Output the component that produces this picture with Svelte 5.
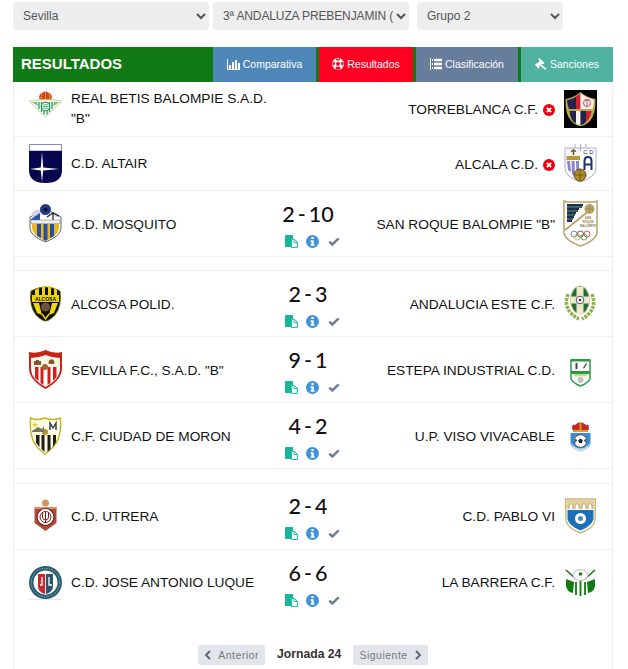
<script>
  const rows = [
    { cls: 'r1', home: 'betis', homeName: 'REAL BETIS BALOMPIE S.A.D. "B"', away: 'torre', awayName: 'TORREBLANCA C.F.', status: true },
    { cls: 'r2', home: 'altair', homeName: 'C.D. ALTAIR', away: 'alcala', awayName: 'ALCALA C.D.', status: true },
    { cls: 'played', home: 'mosquito', homeName: 'C.D. MOSQUITO', away: 'roque', awayName: 'SAN ROQUE BALOMPIE "B"', score: '2 - 10' },
    { spacer: 's1' },
    { cls: 'played', home: 'alcosa', homeName: 'ALCOSA POLID.', away: 'andalucia', awayName: 'ANDALUCIA ESTE C.F.', score: '2 - 3' },
    { cls: 'played', home: 'sevilla', homeName: 'SEVILLA F.C., S.A.D. "B"', away: 'estepa', awayName: 'ESTEPA INDUSTRIAL C.D.', score: '9 - 1' },
    { cls: 'played', home: 'moron', homeName: 'C.F. CIUDAD DE MORON', away: 'viso', awayName: 'U.P. VISO VIVACABLE', score: '4 - 2' },
    { spacer: 's2' },
    { cls: 'played up', home: 'utrera', homeName: 'C.D. UTRERA', away: 'pablo', awayName: 'C.D. PABLO VI', score: '2 - 4' },
    { cls: 'played up last', home: 'jose', homeName: 'C.D. JOSE ANTONIO LUQUE', away: 'barrera', awayName: 'LA BARRERA C.F.', score: '6 - 6' }
  ];
</script>

{#snippet crest(id)}
  <svg class="crest" viewBox="0 0 33 39" width="33" height="39" aria-hidden="true">
    {#if id === 'betis'}
      <path d="M0 11 Q8 9.500 16.500 9.500 Q25 9.500 33 11 L16.500 27Z" fill="#fbfbf2" stroke="#a5c98f" stroke-width=".8"/>
      <path d="M2.500 12 L8 12 L9 16 Z M30.500 12 L25 12 L24 16 Z" fill="#7dbb74"/>
      <path d="M9 11.500h15v7l-7.500 7.500-7.500-7.500z" fill="#fff"/>
      <path d="M10 12v7M12.500 12v10M15 12v12.500M18 12v12.500M20.500 12v10M23 12v7" stroke="#2a9a52" stroke-width="1.300"/>
      <circle cx="16.500" cy="16.500" r="4.200" fill="#fff" stroke="#158a45" stroke-width="1.100"/>
      <path d="M13.500 16.500h6M14 14.800h5M14 18.200h5" stroke="#158a45" stroke-width=".7"/>
      <path d="M10.500 9 Q9.500 4 13 3 Q16.500 0 20 3 Q23.500 4 22.500 9Z" fill="#d8342a"/>
      <path d="M10.500 9.200h12M16.500 1v8M13 3.500l-1 5M20 3.500l1 5" stroke="#d9a520" stroke-width="1.100"/>
    {:else if id === 'altair'}
      <path d="M.5.500h32V7H.5z" fill="#fff" stroke="#8a8aa6"/>
      <path d="M0 7h33v19q0 13-16.500 13T0 26z" fill="#06064f"/>
      <path d="M13 8l1.200 15.500L30 25l-15.800 1.500L13 38l-1.200-11.500L1 25l10.800-1.500z" fill="#fff"/>
    {:else if id === 'torre'}
      <rect y="0" width="33" height="38" fill="#000"/>
      <path d="M1.500 9 Q10 7.500 16.500 2 Q23 7.500 31.500 9 Q32 24 26 31 Q21 36 16.500 36 Q12 36 7 31 Q1 24 1.500 9Z" fill="#b9a94a"/>
      <path d="M3 10 Q9 9 12 6.500 V19 H5 Q3 14 3 10Z M12 21 V33 Q9 32.500 8 30 Q6 26 5.500 21Z" fill="#23234f"/>
      <path d="M12 6.500 L16.500 3.500 V19 H12Z M22 21 H27.500 Q26.500 28 22 32Z" fill="#d31f35"/>
      <path d="M16.500 3.500 Q22 7.500 30 10 Q30 15 28.500 19 H16.500Z" fill="#f2ecec"/>
      <path d="M12 21h4.500v14q-2.500 0-4.500-1.500z" fill="#f4f4f4"/>
      <path d="M16.500 21H22V32q-2.500 3-5.500 3z" fill="#23234f"/>
      <circle cx="23" cy="13" r="3.500" fill="none" stroke="#c65a68"/>
      <path d="M20.500 10h5M23 10v7" stroke="#c65a68"/>
    {:else if id === 'alcala'}
      <path d="M1 4H32V24Q32 33 16.500 38Q1 33 1 24Z" fill="#fff" stroke="#a9afc9"/>
      <path d="M16.500 0V7M11 0V4M22 0V4" stroke="#a9afc9"/>
      <path d="M3 5h13v12H3z" fill="#f4f4f4"/>
      <path d="M9.500 5v6M7 7h5" stroke="#6b5a1c" stroke-width="1.500"/>
      <path d="M2.500 12h13.500v4H2.500z" fill="#b79a36"/>
      <path d="M3 17h3l1 11-3-2zM7.500 17h3l.5 15-3-2zM12 17h3v10l-2.500 3z" fill="#8a84c9"/>
      <text class="cl" x="24.500" y="9.500">C D</text>
      <path d="M20.500 26v-9q0-4 3.500-4t3.500 4v9M20.500 20.500h7" fill="none" stroke="#1f2f6f" stroke-width="2"/>
      <circle cx="16" cy="31" r="6" fill="#b08a2c" stroke="#5f4a12"/>
      <path d="M10.500 31h11M16 25.500v11" stroke="#5f4a12" stroke-width=".7"/>
    {:else if id === 'mosquito'}
      <path d="M1 13 L16.500 5 L32 13 V24 Q32 32 16.500 38 Q1 32 1 24Z" fill="#fff" stroke="#666"/>
      <path d="M3 8l7-3 2 6-8 4zM24 7l6 4-1 3-5-3z" fill="#cfd3e8"/>
      <path d="M2 15L11 9 11 16H2z" fill="#2a52a8"/>
      <circle cx="16.500" cy="5.500" r="5.500" fill="#233a83"/>
      <circle cx="16.500" cy="5.500" r="2" fill="#0c1236"/>
      <path d="M18 13l6-4 6 3M24 9v8" stroke="#222" stroke-width="1.200" fill="none"/>
      <rect x="2" y="16" width="29" height="3.500" fill="#eee" stroke="#777" stroke-width=".5"/>
      <path d="M3 20H30V24Q30 31 16.500 37Q3 31 3 24Z" fill="#e9b820"/>
      <path d="M8 20h4v14l-4-2zM14.500 20h4v16l-2 .8-2-.8zM21 20h4v12l-4 2z" fill="#2750a2"/>
    {:else if id === 'roque'}
      <path d="M0-3 L3-2 H30 L33-3 V28 Q33 36 16.500 42 Q0 36 0 28Z" fill="#fff" stroke="#b7a36a" stroke-width="1.500"/>
      <path d="M3 0H19V2H3zM3 4H15V6H3zM3 8H12V10H3zM3 12H10V14H3zM3 16H8V18H3z" fill="#2b2760"/>
      <path d="M3 2H18V4H3zM3 6H14V8H3zM3 10H11V12H3zM3 14H9V16H3z" fill="#2f6e44"/>
      <path d="M1 26L26 6" stroke="#b7a36a" stroke-width="1.800"/>
      <circle cx="25.500" cy="5" r="5" fill="#b7a36a"/>
      <path d="M21 5h9M25.500 .5v9" stroke="#8f7f4c" stroke-width=".5"/>
      <text class="sr" x="24" y="15">SAN</text><text class="sr" x="24" y="19">ROQUE</text><text class="sr" x="24" y="23">BALOMPIE</text>
      <g fill="none" stroke-width=".8"><circle cx="10" cy="30" r="3" stroke="#3a70bd"/><circle cx="16.500" cy="30" r="3" stroke="#333"/><circle cx="23" cy="30" r="3" stroke="#d33"/><circle cx="13.500" cy="33" r="3" stroke="#d9a520"/><circle cx="20" cy="33" r="3" stroke="#3a9a52"/></g>
    {:else if id === 'alcosa'}
      <path d="M2 7 Q16.500 -1 31 7 Q33 22 26 31 Q20 37 16.500 37 Q13 37 7 31 Q0 22 2 7Z" fill="#0d0d05" stroke="#6d6310"/>
      <path d="M6 6l4-2v7H6zM13 2h3v9h-3zM19 2h3v9h-3zM25 4l3 2v5h-3z" fill="#ecd50e"/>
      <rect x="3" y="11" width="27" height="7" fill="#e8d20d"/>
      <text class="ac" x="16.500" y="16.800">ALCOSA</text>
      <path d="M4 19L10 19 13 31 8 29ZM29 19L23 19 20 31 25 29Z" fill="#ecd50e"/>
      <circle cx="16.500" cy="23" r="4.500" fill="#6d5040"/>
      <path d="M13 30l3.500 5 3.500-5" fill="none" stroke="#ecd50e" stroke-width="1.500"/>
    {:else if id === 'andalucia'}
      <g fill="none" stroke="#8fb04a" stroke-width="3.500" stroke-dasharray="3 1"><path d="M4 10 Q-2 26 15 35"/><path d="M28 10 Q34 26 18 35"/></g>
      <ellipse cx="16" cy="16" rx="9.500" ry="14" fill="#1f6e36" stroke="#d3c98f"/>
      <path d="M12.500 3h7v27h-7zM6.500 12.500h19v7h-19z" fill="#efe9cc"/>
      <circle cx="16" cy="16" r="3.800" fill="#fff" stroke="#555"/>
      <circle cx="16" cy="16" r="1.300" fill="#333"/>
    {:else if id === 'sevilla'}
      <path d="M0 2 Q8 4 16.500 0 Q25 4 33 2 V18 Q33 30 16.500 39 Q0 30 0 18Z" fill="#c8211a"/>
      <path d="M2 8 Q9 8 16.500 5 Q24 8 31 8 V17H2z" fill="#fff5e6"/>
      <path d="M2 17H31V19Q31 29 16.500 37Q2 29 2 19Z" fill="#fff"/>
      <path d="M6 17h3.500v14l-3.500-3zM11.500 17h3v18l-3-2zM18.500 17h3v16l-3 2zM24 17h3.500v10l-3.500 4z" fill="#d21f1a"/>
      <path d="M5 15v-4h2v-1h3v1h2v4zM20 14a3 3 0 1 1 5 0z" fill="#8a5526"/>
      <circle cx="16" cy="17" r="3" fill="#9c6a2e"/>
    {:else if id === 'estepa'}
      <path d="M7 10H26V28Q26 32 16.500 36Q7 32 7 28Z" fill="#fff" stroke="#2a9a45" stroke-width="1.500"/>
      <path d="M7 9h19v2.500h-19zM7 21h19v3H7z" fill="#2a9a45"/>
      <path d="M11.500 13h2v6h-2zM19 18l3-5 1 .7-3 5z" fill="#444"/>
      <circle cx="16.500" cy="30" r="3" fill="#c4c4c4"/>
      <path d="M9 24h15l-2 2.500h-11z" fill="#c8dd8a"/>
    {:else if id === 'moron'}
      <path d="M1.500 2 Q8 5 16 2 Q24 5 31.500 2 Q33 23 23 32 Q18 37 16 38 Q14 37 9 32 Q0 23 1.500 2Z" fill="#fffce0" stroke="#c5b526" stroke-width="1.400"/>
      <path d="M7 19h3.500v12L7 27zM12.500 19h3v17l-3-3zM18.500 19h3v14l-3 3zM24 19h3v7l-3 5z" fill="#1e1e1e"/>
      <circle cx="16" cy="16" r="3" fill="#b58f2c"/>
      <path d="M3 15l6-4 4 2 2-3v6H3z" fill="#767660"/>
      <path d="M19 6h11v9H19z" fill="#fff"/>
      <path d="M21 14V7l3 5 3-5v7" fill="none" stroke="#333" stroke-width="1.400"/>
      <path d="M6 6l1 2 2 .2-1.500 1.300.5 2L6 10.500 4 11.500l.5-2L3 8.200 5 8z" fill="#e6d63c"/>
    {:else if id === 'viso'}
      <path d="M8.500 14 Q7 8 11 9 Q16.500 3.500 22 9 Q26 8 24.500 14Z" fill="#c2292a"/>
      <path d="M9 15H24M16.500 6V14" stroke="#d9a520" stroke-width="1.800"/>
      <path d="M6.500 17H26.500V28Q26 32 16.500 35.500 Q7 32 6.500 28Z" fill="#3a8fd4"/>
      <path d="M6.500 27Q16.500 38 26.500 27Q26 32 16.500 36Q7 32 6.500 27Z" fill="#c9dfe8"/>
      <circle cx="16.500" cy="25" r="6.300" fill="#fff" stroke="#333" stroke-width=".7"/>
      <path d="M16.500 22.500l2.300 1.700-.9 2.700h-2.800l-.9-2.700zM11 23l2 1-1.500 3zM22 23l-2 1 1.500 3z" fill="#222"/>
    {:else if id === 'utrera'}
      <circle cx="16.500" cy="7" r="3.500" fill="#d6935f"/>
      <path d="M5.500 11H27.500V27L16.500 35 5.500 27Z" fill="#b34a33"/>
      <path d="M5.500 11H27.500V13H5.500z" fill="#d88f63"/>
      <circle cx="16.500" cy="21" r="8.500" fill="#fff" stroke="#7d1f1f" stroke-width="1.200"/>
      <circle cx="16.500" cy="21" r="5.500" fill="none" stroke="#7d1f1f"/>
      <path d="M13.500 16v5a3 3 0 0 0 6 0v-5M16.500 15v12" fill="none" stroke="#7d1f1f"/>
    {:else if id === 'pablo'}
      <path d="M1.500 3H31.500L31 24Q30 32 16.500 37Q3 32 2 24Z" fill="#fff" stroke="#c8b478" stroke-width="1.400"/>
      <path d="M2.500 4H30.500V13H2.500z" fill="#e2cf9f"/>
      <path d="M5 13V9q2-3 4 0v4M11 13V9q2-3 4 0v4M18 13V9q2-3 4 0v4M24 13V9q2-3 4 0v4" fill="#fff" stroke="#bba469"/>
      <path d="M3.500 14H29.500V23Q28 30 16.500 34.500Q5 30 3.500 23Z" fill="#1b70b7"/>
      <circle cx="16.500" cy="22.500" r="5.500" fill="#fff"/>
      <circle cx="16.500" cy="22.500" r="2.500" fill="#4a88b8"/>
    {:else if id === 'barrera'}
      <path d="M2 7L12 16M31 7L21 16" stroke="#1a6e1a" stroke-width="1.500"/>
      <ellipse cx="16.500" cy="12" rx="7.500" ry="5.500" fill="#fff" stroke="#bbb"/>
      <circle cx="16.500" cy="11" r="1.800" fill="#1a7a1a"/>
      <path d="M2 16L10 19 9 30Q3 29 2 23ZM31 16L23 19 24 30Q30 29 31 23Z" fill="#127a12"/>
      <path d="M10 19h13v12h-13z" fill="#f6f6f6"/>
      <path d="M12 19v13M16.500 18v15M21 19v13" stroke="#127a12" stroke-width="1.800"/>
    {:else if id === 'jose'}
      <circle cx="16.500" cy="19.500" r="16.500" fill="#285a6e"/>
      <circle cx="16.500" cy="19.500" r="12" fill="#fff"/>
      <circle cx="16.500" cy="19.500" r="14.200" fill="none" stroke="#8cabb8" stroke-dasharray="1.500 1"/>
      <path d="M9 11H24V23Q24 29 16.500 32Q9 29 9 23Z" fill="#e6e6e6"/>
      <path d="M9 11H16V31Q9 29 9 23Z" fill="#cc2630"/>
      <path d="M17 11H24V23Q24 29 17 31Z" fill="#2a566b"/>
      <path d="M13 14v8h-2M20 14v8h3" fill="none" stroke="#fff" stroke-width="1.300"/>
      <path d="M0 36.500H33" stroke="#e2e6e6"/>
    {/if}
  </svg>
{/snippet}

{#snippet ficons()}
  <div class="ficons">
    <svg viewBox="0 0 13 13" width="13" height="13" aria-hidden="true">
      <path d="M0 0H8V4H6V12H0Z" fill="#15b79b"/>
      <path d="M6.500 4.500H9.500L12.500 7.500V12.500H6.500Z" fill="#fff" stroke="#1cc4a6"/>
      <path d="M9 4.500V7.500H12" fill="none" stroke="#1cc4a6"/>
    </svg>
    <svg viewBox="0 0 13 13" width="13" height="13" aria-hidden="true">
      <circle cx="6.500" cy="6.500" r="6.500" fill="#3d92d8"/>
      <rect x="5.400" y="2" width="2.300" height="2" fill="#fff"/>
      <path d="M4.500 5.200H7.700V9.500H8.700V10.800H4.500V9.500H5.400V6.500H4.500Z" fill="#fff"/>
    </svg>
    <svg class="chk" viewBox="0 0 12 9" width="12" height="9" aria-hidden="true">
      <path d="M1.300 4.600L4.300 7.500 10.700 1.300" fill="none" stroke="#6c7f9c" stroke-width="2.500"/>
    </svg>
  </div>
{/snippet}

<div class="page">
  <div class="filters">
    <select class="f1"><option>Sevilla</option></select>
    <select class="f2"><option>3ª ANDALUZA PREBENJAMIN (3ª ANDALUZA)</option></select>
    <select class="f3"><option>Grupo 2</option></select>
  </div>

  <div class="header">
    <h1>RESULTADOS</h1>
    <nav class="tabs">
      <a class="tab comp" href="#c">
        <svg viewBox="0 0 13 11" width="13" height="11" aria-hidden="true"><path d="M.5 0V10.500H13" fill="none" stroke="#fff"/><path d="M2 6h2v4H2zM5 3h2v7H5zM8 1h2v9H8zM11 4h2v6h-2z" fill="#fff"/></svg>
        Comparativa
      </a>
      <a class="tab res" href="#r">
        <svg viewBox="0 0 12 12" width="12" height="12" aria-hidden="true"><circle cx="6" cy="6" r="6" fill="#fff"/><path d="M6 3.800L8.100 5.300 7.300 7.800H4.700L3.900 5.300ZM4 .6L6 1.500 8 .6 8 2 6 2.800 4 2ZM.5 5L2 3.500 3 4.600 2.500 7 1 7.500ZM11.500 5L10 3.500 9 4.600 9.500 7 11 7.500ZM3.500 11L3.800 9 5 8.800H7L8.200 9 8.500 11 6 11.800Z" fill="#ff0022"/></svg>
        Resultados
      </a>
      <a class="tab cla" href="#l">
        <svg viewBox="0 0 12 12" width="12" height="12" aria-hidden="true"><path d="M.5 0V12" stroke="#fff"/><path d="M2 1H3V3H2zM2 5H3V7H2zM2 9H3V11H2z" fill="#fff"/><path d="M4 .8H12V3.200H4zM4 4.800H12V7.200H4zM4 8.800H12V11.200H4z" fill="#fff"/></svg>
        Clasificación
      </a>
      <a class="tab san" href="#s">
        <svg viewBox="0 0 12 12" width="12" height="12" aria-hidden="true"><path d="M4.500 0L9.500 5 8 6.500 7.200 5.800 6.200 6.800 11.500 10.500 10.300 12 5 7.500 4 8.500 4.700 9.200 3.200 10.700 0 6.500 1.500 5 2.200 5.700 4.700 3 3.500 1.500Z" fill="#fff"/></svg>
        Sanciones
      </a>
    </nav>
  </div>

  <div class="panel">
    {#each rows as m}
      {#if m.spacer}
        <div class="spacer {m.spacer}"></div>
      {:else}
        <div class="row {m.cls}">
          <div class="logo">{@render crest(m.home)}</div>
          <div class="name home">{m.homeName}</div>
          <div class="mid">
            {#if m.score}
              <div class="score">{m.score}</div>
              {@render ficons()}
            {/if}
          </div>
          <div class="name away">
            <span>{m.awayName}</span>
            {#if m.status}
              <svg class="x" viewBox="0 0 12 12" width="12" height="12" aria-hidden="true"><circle cx="6" cy="6" r="6" fill="#e8000f"/><path d="M3.900 3.900L8.100 8.100M8.100 3.900L3.900 8.100" stroke="#fff" stroke-width="2"/></svg>
            {/if}
          </div>
          <div class="logo right">{@render crest(m.away)}</div>
        </div>
      {/if}
    {/each}

    <div class="pager">
      <a class="pbtn" href="#a">
        <svg viewBox="0 0 8 10" width="8" height="10" aria-hidden="true"><path d="M6 1L2 5 6 9" fill="none" stroke="#667" stroke-width="2"/></svg>
        <span>Anterior</span>
      </a>
      <strong>Jornada 24</strong>
      <a class="pbtn" href="#b">
        <span>Siguiente</span>
        <svg viewBox="0 0 8 10" width="8" height="10" aria-hidden="true"><path d="M2 1L6 5 2 9" fill="none" stroke="#667" stroke-width="2"/></svg>
      </a>
    </div>
  </div>
</div>

<style>
  :global(body) { margin: 0; background: #fff; overflow: hidden; }
  .page { height: 669px; overflow: hidden; box-sizing: border-box; padding: 2px 15px 0 13px; font-family: "Liberation Sans", Arial, sans-serif; color: #111; }
  .filters { display: flex; height: 28px; }
  select { height: 28px; border: 0; border-radius: 4px; background-color: #eee; color: #555; font: 12px "Liberation Sans", Arial, sans-serif; padding: 0 4px 0 6px; outline: none; }
  .f1 { width: 196px; margin-right: 4px; }
  .f2 { width: 196px; margin-right: 8px; padding-right: 0; letter-spacing: -.12px; }
  .f3 { width: 146px; }

  .header { margin-top: 17px; height: 35px; background: #117a14; display: flex; justify-content: space-between; align-items: stretch; }
  h1 { margin: 0; padding-left: 8px; font-size: 15px; line-height: 34px; font-weight: 700; color: #fff; }
  .tabs { display: flex; gap: 3px; }
  .tab { display: flex; align-items: center; justify-content: center; gap: 3px; padding-bottom: 1px; box-sizing: border-box; color: #fff; text-decoration: none; font-size: 10.500px; }
  .comp { width: 103px; background: #4f87b8; }
  .res { width: 94px; background: #ff0022; }
  .cla { width: 102px; background: #667d9c; }
  .san { width: 92px; background: #4fb3a0; }

  .panel { border: 1px solid #eee; border-width: 0 1px; min-height: 600px; }
  .row { display: grid; grid-template-columns: 57px 207px 60px 217px 1fr; align-items: center; box-sizing: border-box; border-bottom: 1px solid #eee; font-size: 13.700px; line-height: 20px; }
  .r1 { height: 55px; }
  .r2 { height: 54px; }
  .played { height: 66px; }
  .up { padding-bottom: 2px; }
  .last { border-bottom: 0; }
  .spacer { box-sizing: border-box; border-bottom: 1px solid #eee; }
  .s1 { height: 14px; }
  .s2 { height: 15px; }
  .logo { padding-left: 15px; height: 39px; }
  .logo.right { padding-left: 9px; }
  .crest { display: block; overflow: visible; }
  .name { padding-top: 2px; }
  .r1 .name.home, .r2 .name.home { padding-top: 0; }
  .name.home { padding-right: 6px; }
  .name.away { display: flex; justify-content: flex-end; align-items: center; gap: 5px; white-space: nowrap; }
  .mid { display: flex; flex-direction: column; align-items: center; padding-top: 2px; }
  .score { font-family: Lato, sans-serif; font-size: 21.500px; line-height: 26px; font-weight: 500; word-spacing: -2.500px; color: #111; white-space: nowrap; }
  .ficons { display: flex; align-items: center; gap: 8px; margin-top: 8px; padding-left: 8px; }
  .chk { margin-left: 1px; }
  .pager { display: flex; justify-content: center; align-items: flex-start; margin-top: 29px; gap: 12px; padding-bottom: 20px; }
  .pbtn { display: flex; align-items: center; gap: 6px; height: 20px; padding: 0 6px; background: #e2e6ec; border-radius: 2px; color: #777; text-decoration: none; font-size: 10.500px; letter-spacing: .5px; }
  .pager strong { font-size: 12.200px; line-height: 18px; color: #333; }
  .cl { font: 6px "Liberation Sans", sans-serif; fill: #1f2f6f; text-anchor: middle; }
  .sr { font: bold 3px "Liberation Sans", sans-serif; fill: #8f7f4c; text-anchor: middle; }
  .ac { font: bold 5px "Liberation Sans", sans-serif; fill: #111; text-anchor: middle; }
</style>
